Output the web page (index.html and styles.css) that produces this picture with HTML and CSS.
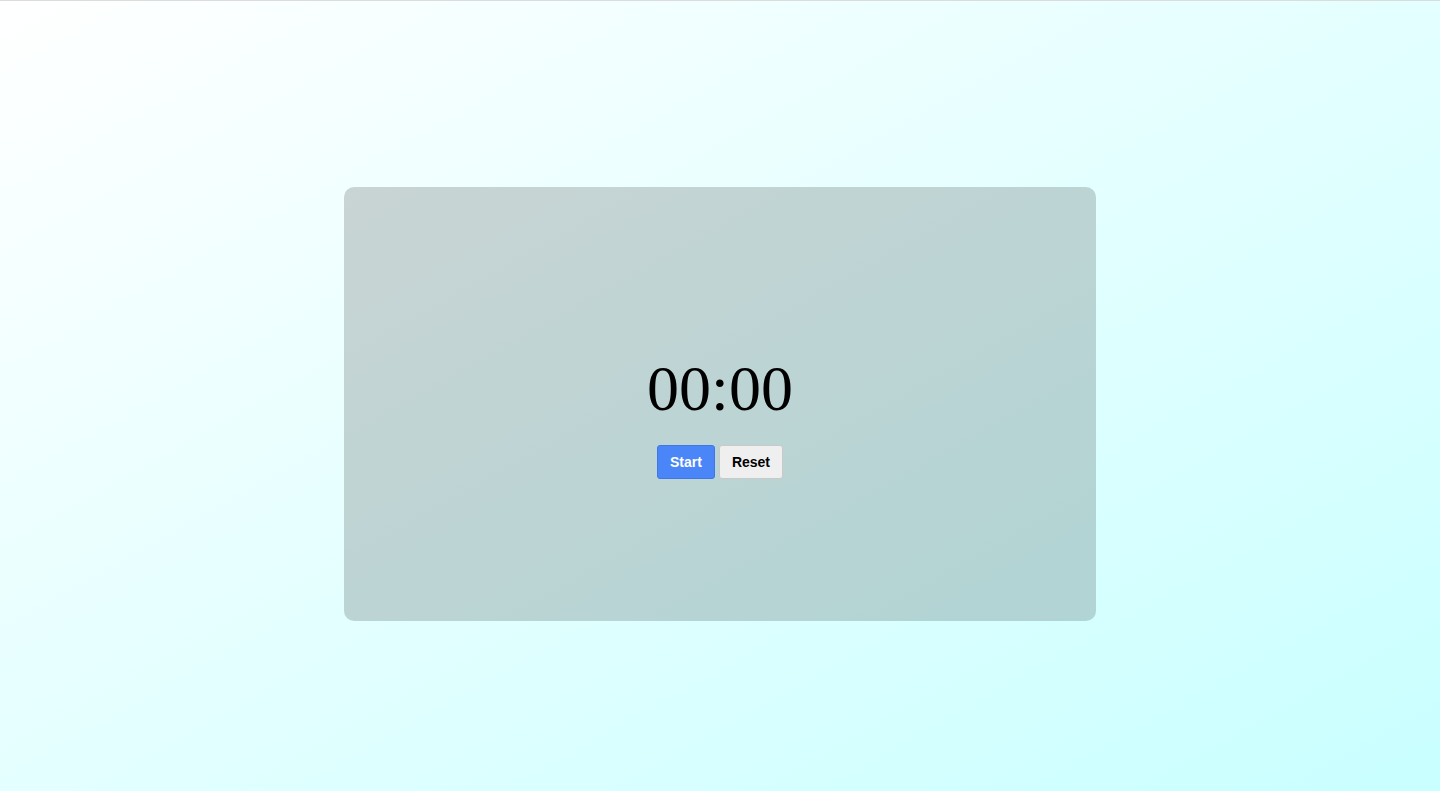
FILE: index.html
```html
<!DOCTYPE html>
<html lang="en">
<head>
<meta charset="utf-8">
<title>Timer</title>
<link rel="stylesheet" href="styles.css">
</head>
<body>
<div class="page">
  <div class="card">
    <div class="time">00:00</div>
    <div class="controls">
      <button class="btn btn-start">Start</button>
      <button class="btn btn-reset">Reset</button>
    </div>
  </div>
</div>
</body>
</html>
```

FILE: styles.css
```css
html {
  min-height: 100%;
  background: linear-gradient(to bottom right, #ffffff, #c8ffff);
  border-top: 1px solid #dcdcdc;
}
body {
  margin: 7px 8px 8px;
  font-family: "Liberation Sans", Arial, sans-serif;
}
.page {
  min-height: 100vh;
  display: flex;
  align-items: center;
  justify-content: center;
}
.card {
  width: 752px;
  height: 434px;
  border-radius: 10px;
  background: rgba(0, 0, 0, 0.17);
  display: flex;
  flex-direction: column;
  align-items: center;
  justify-content: center;
  gap: 19px;
  padding-top: 23px;
  box-sizing: border-box;
}
.time {
  font-family: "Liberation Serif", "Times New Roman", serif;
  font-size: 64px;
  line-height: 74px;
  color: #000;
}
.controls {
  display: flex;
  gap: 4px;
}
.btn {
  font-family: "Liberation Sans", Arial, sans-serif;
  font-weight: bold;
  font-size: 14px;
  line-height: 16px;
  padding: 8px 12px;
  border-radius: 3px;
  cursor: pointer;
}
.btn-start {
  background: #4a86f7;
  border: 1px solid #3f78e6;
  color: #fff;
}
.btn-reset {
  background: #efefef;
  border: 1px solid #c9c9c9;
  color: #000;
}
```
